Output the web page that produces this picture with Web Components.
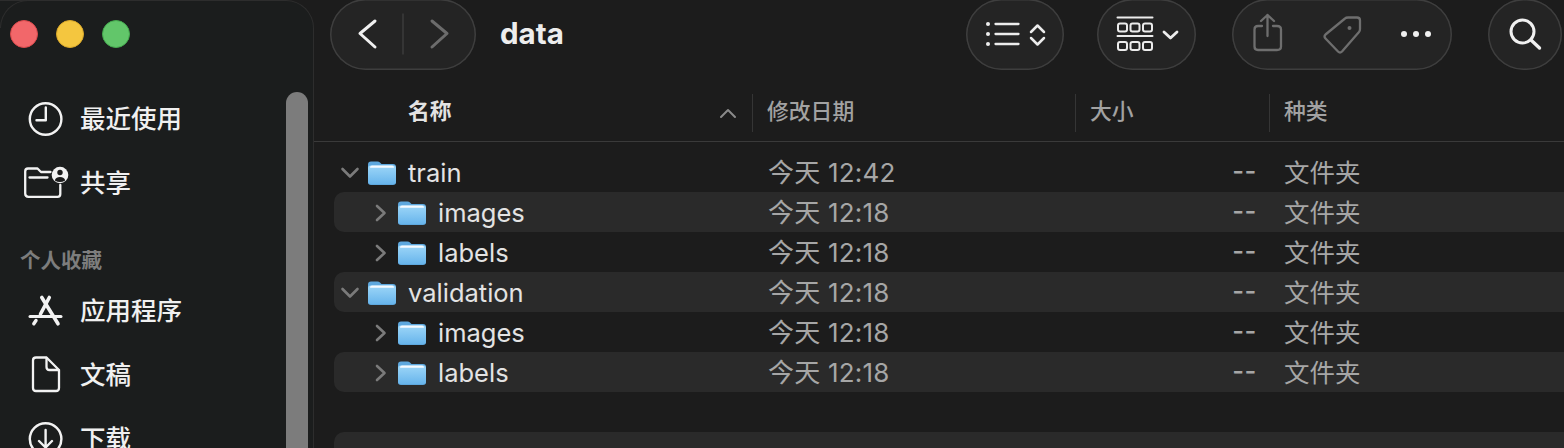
<!DOCTYPE html>
<html lang="zh">
<head>
<meta charset="utf-8">
<title>data</title>
<style>
html,body{margin:0;padding:0;width:1564px;height:448px;overflow:hidden;background:#1c1c1c;}
body{font-family:Inter,"Noto Sans CJK SC",sans-serif;}
x-finder{width:1564px;height:448px;}
</style>
</head>
<body>
<x-finder>
  <x-sidebar slot="side">
    <x-side-item label="最近使用"><svg viewBox="20 99 50 40" fill="none" stroke="#f2f2f2" stroke-width="2.4" stroke-linecap="round" stroke-linejoin="round"><circle cx="45.6" cy="119" r="15.8"/><path d="M45.8 107.5V120.3H36.5"/></svg></x-side-item>
    <x-side-item label="共享"><svg viewBox="20 163 50 40" fill="none" stroke="#f2f2f2" stroke-width="2.3" stroke-linecap="round" stroke-linejoin="round"><path d="M50.5 172H41L37.5 168.5H28Q25.2 168.500 25.200 171.500V193.500Q25.200 196.800 28.500 196.800H57.500Q60.300 196.800 60.300 194V185"/><path d="M29.500 177.500H47.500"/><circle cx="60" cy="175" r="8.300" fill="#f2f2f2" stroke="none"/><circle cx="60" cy="172.500" r="2.700" fill="#1c1c1c" stroke="none"/><path d="M54.800 180.500Q55.500 177 60 177T65.200 180.500Q60 183.500 54.800 180.500Z" fill="#1c1c1c" stroke="none"/></svg></x-side-item>
    <x-side-head>个人收藏</x-side-head>
    <x-side-item label="应用程序"><svg viewBox="20 291 50 40" fill="none" stroke="#f2f2f2" stroke-linecap="round"><path d="M41.800 297.500L58 323.800" stroke-width="3.600"/><path d="M49.300 297.500L40.500 314" stroke-width="3.600"/><path d="M30 316.500H61" stroke-width="3"/><path d="M36 320.500L33.800 323.800" stroke-width="3.400"/></svg></x-side-item>
    <x-side-item label="文稿"><svg viewBox="20 355 50 40" fill="none" stroke="#f2f2f2" stroke-width="2.300" stroke-linecap="round" stroke-linejoin="round"><path d="M46.500 357.500H36Q33 357.500 33 360.500V388Q33 391 36 391H56Q59 391 59 388V370L46.500 357.500Z"/><path d="M46.500 358V367Q46.500 370 49.500 370H58.500"/></svg></x-side-item>
    <x-side-item label="下载"><svg viewBox="20 419 50 40" fill="none" stroke="#f2f2f2" stroke-width="2.400" stroke-linecap="round" stroke-linejoin="round"><circle cx="45.600" cy="439" r="15.800"/><path d="M45.600 430V447M39 441L45.600 447.500L52 441"/></svg></x-side-item>
  </x-sidebar>

  <x-toolbar slot="tool">
    <x-pill style="--w:146px"><svg viewBox="330 -1 146 71" fill="none" stroke-linecap="round" stroke-linejoin="round"><path d="M375 21L360 33.500L375 47" stroke="#f0f0f0" stroke-width="3"/><path d="M403 14V54" stroke="#3b3b3b" stroke-width="1.500"/><path d="M432 21L447 33.500L432 47" stroke="#6c6c6c" stroke-width="3"/></svg></x-pill>
    <x-title>data</x-title>
    <x-spring></x-spring>
    <x-pill style="--w:98px"><svg viewBox="966 -1 98 71" fill="none" stroke="#ececec" stroke-width="2.300" stroke-linecap="round" stroke-linejoin="round"><circle cx="988" cy="24" r="2" fill="#ececec" stroke="none"/><circle cx="988" cy="34" r="2" fill="#ececec" stroke="none"/><circle cx="988" cy="44" r="2" fill="#ececec" stroke="none"/><path d="M995.500 24H1018.500M995.500 34H1018.500M995.500 44H1018.500"/><path d="M1031 32L1037.500 25.500L1044 32M1031 38L1037.500 44.500L1044 38" stroke-width="2.500"/></svg></x-pill>
    <x-pill style="--w:99px;margin-left:33px"><svg viewBox="1097 -1 99 71" fill="none" stroke="#ececec" stroke-width="2" stroke-linejoin="round" stroke-linecap="round"><path d="M1117.500 17.500H1152.500M1117.500 36H1152.500"/><rect x="1118" y="23.500" width="9" height="8" rx="2"/><rect x="1130.500" y="23.500" width="9" height="8" rx="2"/><rect x="1143" y="23.500" width="9" height="8" rx="2"/><rect x="1118" y="42" width="9" height="8" rx="2"/><rect x="1130.500" y="42" width="9" height="8" rx="2"/><rect x="1143" y="42" width="9" height="8" rx="2"/><path d="M1164 32L1170.500 38L1177 32" stroke-width="2.800"/></svg></x-pill>
    <x-pill style="--w:220px;margin-left:36px"><svg viewBox="1232 -1 220 71" fill="none" stroke="#6e6e6e" stroke-width="2.300" stroke-linecap="round" stroke-linejoin="round"><path d="M1262 26H1258Q1254.500 26 1254.500 29.500V46.500Q1254.500 50 1258 50H1277Q1281 50 1281 46.500V29.500Q1281 26 1277 26H1273"/><path d="M1267.500 36V15M1261 21L1267.500 15L1274 21"/><path d="M1325.500 34.500L1345 18.500Q1346 17.500 1348 17.500H1357Q1360 17.500 1360 20.500V29Q1360 31 1359 32L1342 51.500Q1340 53.500 1338 51.500L1325.500 38.500Q1323.500 36.500 1325.500 34.500Z"/><circle cx="1349.500" cy="28" r="2" fill="#6e6e6e" stroke="none"/><circle cx="1404" cy="34" r="3" fill="#f0f0f0" stroke="none"/><circle cx="1416" cy="34" r="3" fill="#f0f0f0" stroke="none"/><circle cx="1428" cy="34" r="3" fill="#f0f0f0" stroke="none"/></svg></x-pill>
    <x-pill style="--w:74px;margin-left:36px"><svg viewBox="1488 -1 74 71" fill="none" stroke="#f0f0f0" stroke-width="3" stroke-linecap="round"><circle cx="1522.500" cy="31.500" r="11.500"/><path d="M1531 40L1539.500 48" stroke-width="3.400"/></svg></x-pill>
  </x-toolbar>

  <x-list-head slot="head"></x-list-head>

  <x-file-list slot="list">
    <x-file-row name="train" date="今天 12:42" open></x-file-row>
    <x-file-row name="images" date="今天 12:18" level="1" stripe></x-file-row>
    <x-file-row name="labels" date="今天 12:18" level="1"></x-file-row>
    <x-file-row name="validation" date="今天 12:18" open stripe></x-file-row>
    <x-file-row name="images" date="今天 12:18" level="1"></x-file-row>
    <x-file-row name="labels" date="今天 12:18" level="1" stripe></x-file-row>
    <x-file-row empty></x-file-row>
    <x-file-row empty stripe></x-file-row>
  </x-file-list>
</x-finder>

<script>
const FONT = 'Inter,"Noto Sans CJK SC",sans-serif';
let uid = 0;
function def(name, css, html){
  customElements.define(name, class extends HTMLElement{
    constructor(){
      super();
      this.attachShadow({mode:'open'});
    }
    connectedCallback(){
      this.shadowRoot.innerHTML = '<style>'+css+'</style>'+(typeof html==='function'?html(this):html);
    }
  });
}

def('x-finder',
 `:host{display:grid;grid-template-columns:314px 1fr;grid-template-rows:70px 72px 1fr;background:#1c1c1c;overflow:hidden;font-family:${FONT};}
  .s{grid-row:1/4;grid-column:1;display:block;min-height:0;overflow:hidden;}`,
 `<div class="s"><slot name="side"></slot></div><slot name="tool"></slot><slot name="head"></slot><slot name="list"></slot>`);

def('x-sidebar',
 `:host{display:flex;flex-direction:column;box-sizing:border-box;width:314px;height:500px;padding-top:85.500px;position:relative;
   background:#1b1d1d;border:1.500px solid #2d2d2d;border-bottom:none;border-left:none;border-radius:0 28px 0 0;}
  .lights{position:absolute;left:10px;top:18.500px;display:flex;gap:18px;}
  .lights i{width:28px;height:28px;border-radius:50%;box-sizing:border-box;display:block;}
  .r{background:#f2676a;border:1px solid #d94a4c;}
  .y{background:#f4c63f;border:1px solid #dba92a;}
  .g{background:#62c66a;border:1px solid #44a94e;}
  .bar{position:absolute;left:286px;top:90.500px;width:22px;height:420px;border-radius:11px;background:#7c7c7c;}
  .corner{position:absolute;left:0;top:-1.500px;width:28px;height:28px;border-radius:28px 0 0 0;border:solid #2d2d2d;border-width:1.500px 0 0 1.500px;box-sizing:border-box;}`,
 `<div class="corner"></div><div class="lights"><i class="r"></i><i class="y"></i><i class="g"></i></div><slot></slot><div class="bar"></div>`);

def('x-side-item',
 `:host{display:flex;align-items:center;height:64px;padding-left:20px;gap:10px;color:#f0f0f0;font-size:25.500px;font-weight:500;flex:none;}
  ::slotted(svg){width:50px;height:40px;flex:none;}
  span{padding-bottom:5px;}`,
 h=>`<slot></slot><span>${h.getAttribute('label')}</span>`);

def('x-side-head',
 `:host{display:block;height:28px;line-height:28px;padding:32px 0 4px 20px;color:#7d7d7d;font-size:20.500px;font-weight:700;flex:none;}`,
 `<slot></slot>`);

def('x-toolbar',
 `:host{display:flex;align-items:flex-start;height:70px;padding-left:16px;padding-right:2px;}`,
 `<slot></slot>`);

def('x-pill',
 `:host{display:block;flex:none;width:var(--w);height:71px;margin-top:-1px;border-radius:36px;background:#242424;box-shadow:inset 0 0 0 1.500px #3e3e3e;}
  ::slotted(svg){display:block;width:100%;height:100%;}`,
 `<slot></slot>`);

def('x-title',
 `:host{display:block;margin-left:24px;line-height:67px;font-size:29.500px;font-weight:700;color:#ededed;}`,
 `<slot></slot>`);

def('x-spring',`:host{display:block;flex:1;}`,``);

def('x-list-head',
 `:host{display:grid;grid-template-columns:438px 323px 194px 1fr;border-bottom:1.500px solid #3a3a3a;box-sizing:border-box;height:72px;font-size:21.800px;color:#a2a2a2;font-weight:500;}
  .c{display:flex;align-items:center;height:38px;box-sizing:border-box;padding-bottom:8px;margin-top:24px;}
  .n{padding-left:94px;color:#e2e2e2;font-weight:700;position:relative;}
  .n svg{position:absolute;left:405px;top:13px;width:18px;height:12px;}
  .d{border-left:1.500px solid #353535;padding-left:14px;}
  .d:nth-child(2){padding-left:16px;}`,
 `<div class="c n">名称<svg viewBox="0 0 18 12" fill="none" stroke="#8a8a8a" stroke-width="2" stroke-linecap="round" stroke-linejoin="round"><path d="M2 10L9 3L16 10"/></svg></div><div class="c d">修改日期</div><div class="c d">大小</div><div class="c d">种类</div>`);

def('x-file-list',
 `:host{display:flex;flex-direction:column;padding:10px 0 0 20px;}`,
 `<slot></slot>`);

function folder(){
 const id = 'b'+(++uid);
 return `<svg class="f" viewBox="0 0 28 24"><defs><linearGradient id="${id}" x1="0" y1="0" x2="0" y2="1"><stop offset="0" stop-color="#9dd6f8"/><stop offset="1" stop-color="#68b5ec"/></linearGradient></defs>
<path d="M0 3.500Q0 .5 3 .5H9.500Q11 .5 12 1.500L13.500 3H25Q28 3 28 6V21Q28 24 25 24H3Q0 24 0 21Z" fill="#5ea8de"/>
<path d="M0 7Q0 4.500 2.500 4.500H25.500Q28 4.500 28 7V20.500Q28 23 25.500 23H2.500Q0 23 0 20.500Z" fill="url(#${id})"/>
<path d="M2 6.700Q2 4.500 4 4.500H24Q26 4.500 26 6.700Z" fill="#f6fbff"/></svg>`;
}

def('x-file-row',
 `:host{display:grid;grid-template-columns:434px 316px 173px 1fr;align-items:center;height:40px;flex:none;font-size:25.500px;color:#a6a6a6;}
  :host([stripe]){background:#2a2a2a;border-radius:10px 0 0 10px;}
  .n{display:flex;align-items:center;color:#e3e3e3;}
  .n span{padding-bottom:1px;}
  .ch{width:34px;height:24px;flex:none;}
  .f{width:28px;height:24px;flex:none;margin:0 12px 0 0;}
  .sz{text-align:right;letter-spacing:.6px;font-weight:500;}
  .k{padding-left:27px;}
  .d{letter-spacing:.2px;font-size:26px;}
  .d,.sz,.k{white-space:nowrap;padding-bottom:4px;}`,
 h=>{
  if(h.hasAttribute('empty')) return '';
  const lv = +(h.getAttribute('level')||0);
  const chev = h.hasAttribute('open')
    ? '<path d="M8.500 8L16 15.500L23.500 8"/>'
    : '<path d="M13 5L20.500 12L13 19"/>';
  return `<div class="n" style="padding-left:${lv*30}px"><svg class="ch" viewBox="0 0 34 24" fill="none" stroke="#7b7b7b" stroke-width="2.600" stroke-linecap="round" stroke-linejoin="round">${chev}</svg>${folder()}<span>${h.getAttribute('name')}</span></div><div class="d">${h.getAttribute('date')}</div><div class="sz">--</div><div class="k">文件夹</div>`;
 });
</script>
</body>
</html>
